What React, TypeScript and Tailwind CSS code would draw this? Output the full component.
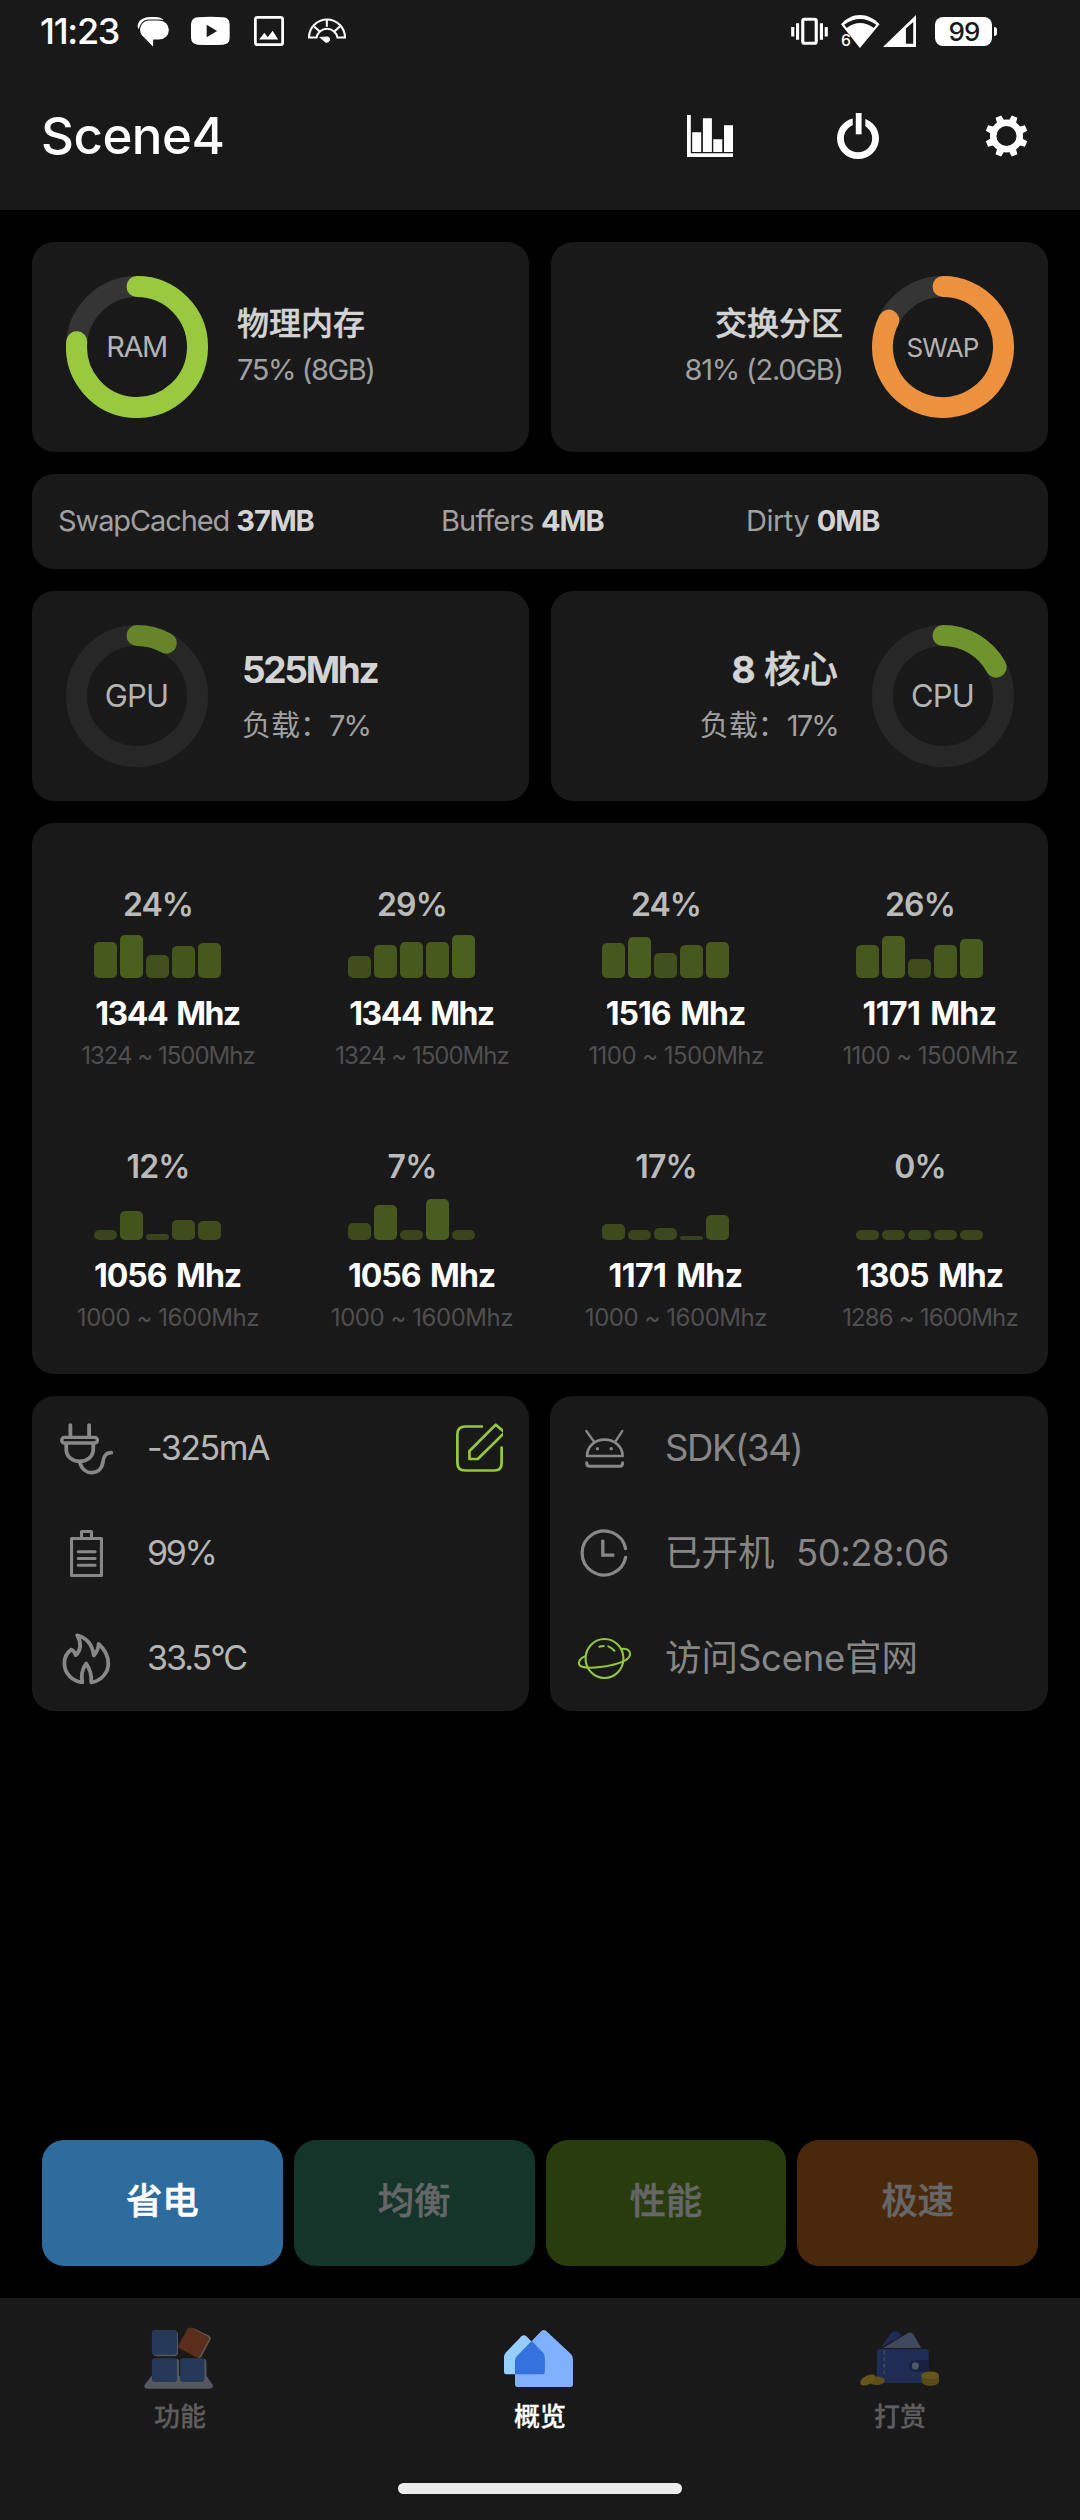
import type { ReactNode } from "react";

const SANS = "font-['Inter','Noto_Sans_CJK_SC',sans-serif]";

function Icon({ box, className, children }: { box: string; className: string; children: ReactNode }) {
  return (
    <svg viewBox={box} preserveAspectRatio="none" fill="none" className={`shrink-0 overflow-visible ${className}`}>
      {children}
    </svg>
  );
}

/* ---------- status bar ---------- */

function StatusBar() {
  return (
    <div className="flex h-[62px] items-center pl-[40px] pr-[83px] text-white">
      <span className="w-[79px] whitespace-nowrap text-[36px] font-medium leading-[40px] tracking-[-1.3px]">11:23</span>
      <Icon box="399 51 92 90" className="ml-[18px] mt-[2px] h-[30px] w-[32px]">
        <path d="M402 86C396 66 414 51 436 51H452C462 51 470 55 475 60Z" fill="#fff" />
        <path
          d="M435 60H462C480 60 492 74 492 90C492 107 480 120 462 120H447V144L412 107C398 86 412 60 435 60Z"
          fill="#fff"
          stroke="#191919"
          strokeWidth="3"
        />
      </Icon>
      <Icon box="556 51 112 82" className="ml-[22px] h-[28px] w-[39px]">
        <path d="M576 52Q612 49 648 52Q667 53 667 72V112Q667 131 648 132Q612 134 576 132Q557 131 556 112V72Q557 53 576 52Z" fill="#fff" />
        <path d="M601 74L631 92L601 110Z" fill="#191919" />
      </Icon>
      <Icon box="738 47 87 89" className="ml-[24px] h-[30px] w-[30px]">
        <rect x="742" y="51" width="79" height="81" rx="6" stroke="#fff" strokeWidth="8" />
        <path d="M753 117L768 97L778 110L792 91L808 117Z" fill="#fff" />
      </Icon>
      <Icon box="894 57 111 71" className="ml-[24px] h-[24px] w-[38px]">
        <path d="M897 112A52 53 0 0 1 1002 112H980A31 32 0 0 0 919 112Z" stroke="#fff" strokeWidth="6" />
        <path d="M912 79L928 94M949 60V80M987 79L971 94" stroke="#fff" strokeWidth="6" />
        <path d="M926 110L951 109Q960 112 958 120Q955 129 946 127Z" fill="#fff" />
      </Icon>
      <div className="ml-auto flex items-center">
        <Icon box="728 52 107 82" className="h-[27px] w-[37px]">
          <rect x="762" y="56" width="39" height="73" rx="5" stroke="#fff" strokeWidth="9" />
          <path d="M747 68V118M816 68V118" stroke="#fff" strokeWidth="9" />
          <path d="M733 79V108M830 79V108" stroke="#fff" strokeWidth="9" />
        </Icon>
        <Icon box="875 42 112 99" className="ml-[13.5px] h-[33px] w-[38.5px]">
          <text x="875" y="136" fontSize="46" fill="#fff" fontFamily="Inter" fontWeight="500">6</text>
          <path d="M930 141L875 70C890 52 910 42 930 42C950 42 972 52 987 70Z" fill="#fff" />
          <path d="M888 76Q930 44 974 76" stroke="#191919" strokeWidth="12" />
        </Icon>
        <Icon box="997 44 95 97" className="ml-[3.5px] h-[32px] w-[33px]">
          <path d="M997 141L1092 44V141Z" fill="#fff" />
          <path d="M1063 85L1084 65V131H1063Z" fill="#191919" />
        </Icon>
        <div className="ml-[19px] flex h-[29px] w-[57px] items-center justify-center rounded-[8px] bg-white pl-[1px] text-[26px] font-medium leading-[29px] tracking-[-0.8px] text-[#191919]">
          99
        </div>
        <div className="ml-[2px] h-[9px] w-[3px] rounded-r-[3px] bg-white" />
      </div>
    </div>
  );
}

/* ---------- title bar ---------- */

const TEETH = [22.5, 67.5, 112.5, 157.5, 202.5, 247.5, 292.5, 337.5];

function TitleBar() {
  return (
    <div className="flex h-[148px] items-center pl-[41px] pr-[53px]">
      <h1 className="text-[51px] font-medium leading-[60px] tracking-[-0.5px] text-white">Scene4</h1>
      <Icon box="427 345 133 126" className="ml-auto h-[42px] w-[46px]">
        <path d="M427 345h11v115h122v11H427z" fill="#fff" />
        <path d="M442 397h26v59h-26zM473 355h26v101h-26zM503 418h26v38h-26zM534 376h26v80h-26z" fill="#fff" />
      </Icon>
      <Icon box="862 339 123 138" className="ml-[104px] h-[46px] w-[42px]">
        <ellipse cx="923.5" cy="415" rx="51.5" ry="52" stroke="#fff" strokeWidth="20" />
        <path d="M908 345h37v40h-37z" fill="#191919" />
        <path d="M917 339h17v64h-17z" fill="#fff" />
      </Icon>
      <Icon box="-60 -62 120 124" className="ml-[107px] h-[42px] w-[41px]">
        <circle r="39" stroke="#fff" strokeWidth="19" />
        {TEETH.map((a) => (
          <path key={a} d="M-9 -62H9L11 -44H-11Z" fill="#fff" transform={`rotate(${a})`} />
        ))}
      </Icon>
    </div>
  );
}

/* ---------- cards ---------- */

function Ring({ label, angle, color, track, labelClass }: { label: string; angle: number; color: string; track: string; labelClass: string }) {
  const r = 60.5;
  const rad = (angle * Math.PI) / 180;
  const x = 71 + r * Math.sin(rad);
  const y = 71 - r * Math.cos(rad);
  return (
    <div className="grid h-[142px] w-[142px] shrink-0 place-items-center">
      <svg viewBox="0 0 142 142" fill="none" className="col-start-1 row-start-1 h-[142px] w-[142px]">
        <circle cx="71" cy="71" r={r} stroke={track} strokeWidth="21" />
        <path d={`M71 10.5A${r} ${r} 0 ${angle > 180 ? 1 : 0} 1 ${x} ${y}`} stroke={color} strokeWidth="21" strokeLinecap="round" />
      </svg>
      <span className={`col-start-1 row-start-1 pr-[1px] text-[#b3b3b3] ${labelClass}`}>{label}</span>
    </div>
  );
}

function Card({ className, children }: { className: string; children: ReactNode }) {
  return <section className={`rounded-[22px] bg-[#191919] ${className}`}>{children}</section>;
}

function MemStat({ name, value, nameClass }: { name: string; value: string; nameClass: string }) {
  return (
    <div className="whitespace-pre pb-[2px] text-[29px] leading-[40px] text-[#a0a0a0]">
      <span className={nameClass}>{name} </span>
      <b className="font-bold tracking-[-1.1px] text-[#d3d3d3]">{value}</b>
    </div>
  );
}

const CORES = [
  { load: "24%", mhz: "1344 Mhz", mhzClass: "tracking-[-1.5px]", range: "1324 ~ 1500Mhz", rangeClass: "tracking-[-1px]", bars: [36, 43, 23, 32, 35] },
  { load: "29%", mhz: "1344 Mhz", mhzClass: "tracking-[-1.5px]", range: "1324 ~ 1500Mhz", rangeClass: "tracking-[-1px]", bars: [22, 33, 36, 36, 43] },
  { load: "24%", mhz: "1516 Mhz", mhzClass: "tracking-[-1px]", range: "1100 ~ 1500Mhz", rangeClass: "tracking-[-0.55px]", bars: [35, 41, 25, 33, 36] },
  { load: "26%", mhz: "1171 Mhz", mhzClass: "tracking-[-0.6px]", range: "1100 ~ 1500Mhz", rangeClass: "tracking-[-0.55px]", bars: [33, 42, 19, 33, 39] },
  { load: "12%", mhz: "1056 Mhz", mhzClass: "tracking-[-1px]", range: "1000 ~ 1600Mhz", rangeClass: "tracking-[-0.45px]", bars: [10, 29, 6, 20, 19] },
  { load: "7%", mhz: "1056 Mhz", mhzClass: "tracking-[-1px]", range: "1000 ~ 1600Mhz", rangeClass: "tracking-[-0.45px]", bars: [17, 35, 10, 41, 10] },
  { load: "17%", mhz: "1171 Mhz", mhzClass: "tracking-[-0.6px]", range: "1000 ~ 1600Mhz", rangeClass: "tracking-[-0.45px]", bars: [16, 10, 12, 4, 25] },
  { load: "0%", mhz: "1305 Mhz", mhzClass: "tracking-[-1px]", range: "1286 ~ 1600Mhz", rangeClass: "tracking-[-0.85px]", bars: [10, 10, 10, 10, 10] },
];

function barColor(h: number) {
  const t = (h - 4) / 39;
  return `rgb(${Math.round(55 + 19 * t)}, ${Math.round(65 + 29 * t)}, ${Math.round(27 + 3 * t)})`;
}

function Core({ load, mhz, mhzClass, range, rangeClass, bars }: (typeof CORES)[number]) {
  return (
    <div className="flex flex-col items-center whitespace-nowrap">
      <div className="pr-[2px] text-[32px] font-semibold leading-[40px] tracking-[-0.9px] text-[#bababa]">{load}</div>
      <div className="mt-[9px] flex h-[44px] items-end gap-[3px] pr-[4px]">
        {bars.map((h, i) => (
          <div key={i} className="w-[23px] rounded-[5px]" style={{ height: h, backgroundColor: barColor(h) }} />
        ))}
      </div>
      <div className={`mt-[16px] pl-[17px] text-[32px] font-bold leading-[40px] text-white [word-spacing:3px] ${mhzClass}`}>{mhz}</div>
      <div className={`mt-[7px] pl-[18px] text-[24px] leading-[30px] text-[#4f4f4f] ${rangeClass}`}>{range}</div>
    </div>
  );
}

/* ---------- info icons ---------- */

function PlugIcon() {
  return (
    <Icon box="174 128 153 156" className="h-[52px] w-[53px]">
      <g stroke="#888" strokeWidth="11" strokeLinecap="round" strokeLinejoin="round">
        <path d="M204 134V168M258 134V168" />
        <rect x="179" y="171" width="103" height="17" rx="8" strokeWidth="10" />
        <path d="M192 190V206C192 230 210 243 231 243C252 243 270 230 270 206V190" />
        <path d="M231 246C236 266 250 277 264 277C285 277 296 262 298 245C299 228 308 217 322 217" />
      </g>
    </Icon>
  );
}

function BatteryIcon() {
  return (
    <Icon box="203 450 96 141" className="h-[47px] w-[33px]">
      <g stroke="#888" strokeWidth="9" strokeLinejoin="round" strokeLinecap="round">
        <rect x="207.500" y="475.500" width="87" height="111" />
        <path d="M236.500 475V454.500H265.500V475" />
        <path d="M227 515.500H276M227 535.500H276M227 555.500H276" />
      </g>
    </Icon>
  );
}

function FlameIcon() {
  return (
    <Icon box="183 758 136 154" className="h-[51px] w-[47px]">
      <path
        d="M224 765C250 772 268 793 272 826C281 815 286 803 286 791C302 806 314 828 314 850C314 880 292 903 265 907C266 885 260 865 250 850C240 865 234 885 239 907C210 903 187 880 187 850C187 833 195 817 207 808C212 811 218 817 220 825C234 812 238 788 224 765Z"
        stroke="#888"
        strokeWidth="11"
        strokeLinejoin="round"
      />
    </Icon>
  );
}

function EditIcon() {
  return (
    <svg viewBox="1325 129 136 147" preserveAspectRatio="none" fill="none" className="h-[49px] w-[47px] shrink-0 overflow-hidden">
      <g stroke="#93c83a" strokeWidth="8" strokeLinecap="round">
        <path d="M1400 139.500H1352Q1329 139.500 1329 162V248Q1329 271.500 1352 271.500H1436Q1457 271.500 1457 248V203" />
        <path d="M1440 134L1364 213V237H1388L1466 157Z" strokeLinejoin="round" />
      </g>
    </svg>
  );
}

function AndroidIcon() {
  return (
    <Icon box="131 149 113 114" className="h-[38px] w-[39px]">
      <g stroke="#888" strokeWidth="7" strokeLinecap="round" strokeLinejoin="round">
        <path d="M135 152L157 184M239 152L219 184" />
        <path d="M137 227C137 198 160 178 188 178C216 178 240 198 240 227Z" strokeWidth="8" />
        <path d="M136 247Q136 258 145 258H231Q240 258 240 247" strokeWidth="9" />
      </g>
      <circle cx="167" cy="205" r="5" fill="#888" />
      <circle cx="207" cy="205" r="5" fill="#888" />
    </Icon>
  );
}

function ClockIcon() {
  return (
    <Icon box="119 450 135 141" className="h-[47px] w-[46px]">
      <g stroke="#888" strokeWidth="9.500" strokeLinecap="round">
        <path d="M250 506A64.500 66 0 1 0 250 532" />
        <path d="M183 484V525.500H212" strokeLinecap="square" />
      </g>
    </Icon>
  );
}

function PlanetIcon() {
  return (
    <Icon box="110 774 154 122" className="h-[41px] w-[53px]">
      <g stroke="#93c83a" strokeWidth="6" strokeLinecap="round">
        <ellipse cx="187" cy="835" rx="55" ry="58" />
        <path d="M131 828C112 836 108 852 118 858C140 867 205 861 243 843C265 832 264 818 256 810C251 806 243 805 235 807" />
        <path d="M172 800Q178 798 185 797.500M198 799Q209 803 216 812" strokeWidth="6" />
      </g>
    </Icon>
  );
}

function InfoRow({ icon, children, className }: { icon: ReactNode; children: ReactNode; className: string }) {
  return (
    <div className="flex h-[105px] items-center whitespace-pre">
      <div className="flex w-[60px] justify-center">{icon}</div>
      <div className={`pb-[2px] pl-[31px] leading-[48px] ${className}`}>{children}</div>
    </div>
  );
}

/* ---------- bottom navigation ---------- */

function BlocksIcon() {
  return (
    <Icon box="418 653 201 187" className="mr-[3px] h-[62px] w-[69px]">
      <path d="M440 800H600L617 826Q622 839 610 839H427Q415 839 421 826Z" fill="#54575e" />
      <rect x="444" y="666" width="73" height="75" rx="10" fill="#54575e" />
      <rect x="444" y="749" width="76" height="66" rx="10" fill="#54575e" />
      <rect x="527" y="749" width="73" height="68" rx="10" fill="#54575e" />
      <rect x="441" y="662" width="73" height="75" rx="9" fill="#263858" />
      <rect x="441" y="747" width="73" height="72" rx="9" fill="#263858" />
      <rect x="523" y="747" width="71" height="72" rx="9" fill="#263858" />
      <path d="M559 655L607 679Q615 684 611 692L586 741Q582 748 576 746Z" fill="#635650" />
      <path d="M556 655L602 681Q609 686 606 693L581 740Q577 748 569 744L523 718Q515 714 519 707L544 660Q548 652 556 655Z" fill="#5a2e1a" />
    </Icon>
  );
}

function HomeIcon() {
  return (
    <Icon box="1463 660 201 171" className="mr-[4px] h-[57px] w-[69px]">
      <path d="M1514 679Q1521 672 1528 679L1582 735V793H1470Q1463 793 1463 786V742Q1463 734 1469 727Z" fill="#96cfff" />
      <path d="M1572 663Q1579 657 1586 663L1658 732Q1664 738 1664 748V823Q1664 831 1656 831H1503Q1495 831 1495 823V752Q1495 744 1501 738Z" fill="#80b1ff" />
      <path d="M1544 693L1577 728Q1582 735 1582 744V786Q1582 793 1574 793H1495V752Q1495 744 1501 738Z" fill="#3572dd" />
    </Icon>
  );
}

function WalletIcon() {
  return (
    <Icon box="929 662 231 166" className="mr-[2px] h-[55px] w-[79px]">
      <path d="M990 712L1020 668Q1030 658 1041 666L1052 676Z" fill="#1f2d54" />
      <path d="M996 713L1068 669Q1079 663 1086 673L1108 713Z" fill="#3f485d" />
      <rect x="978" y="716" width="152" height="103" rx="8" fill="#1f2d54" />
      <path d="M1000 721V796" stroke="#3f485d" strokeWidth="5" strokeDasharray="11 9" />
      <path d="M1090 750H1130V785H1090A17.500 17.500 0 0 1 1090 750Z" fill="#17213f" />
      <ellipse cx="1091" cy="767.500" rx="10.500" ry="11" fill="#50566a" />
      <ellipse cx="978" cy="812" rx="24" ry="13" fill="#5d4e1a" />
      <ellipse cx="952" cy="810" rx="25" ry="13" transform="rotate(-30 952 810)" fill="#66561b" />
      <path d="M1109 796V815Q1113 827 1134 827Q1156 827 1160 815V796Z" fill="#5d4e1a" />
      <ellipse cx="1134.500" cy="796" rx="25.500" ry="12" fill="#66561b" />
      <path d="M1109 800Q1113 811 1134 811Q1156 811 1160 800M1109 810Q1113 820 1134 820Q1156 820 1160 810" stroke="#4b3f18" strokeWidth="2" />
    </Icon>
  );
}

function NavItem({ icon, label, className }: { icon: ReactNode; label: string; className: string }) {
  return (
    <div className="flex flex-1 flex-col items-center">
      <div className="flex h-[64px] items-center">{icon}</div>
      <div className={`mt-[9px] text-[26px] font-medium leading-[36px] [-webkit-text-stroke:0.3px] ${className}`}>{label}</div>
    </div>
  );
}

const MODE =
  "flex h-[126px] flex-1 items-center justify-center rounded-[22px] pb-[5px] text-[36.5px] font-medium leading-[48px] [-webkit-text-stroke:0.5px]";

export default function App() {
  return (
    <div className={`flex h-[2520px] w-[1080px] flex-col overflow-hidden bg-black ${SANS}`}>
      <header className="h-[210px] shrink-0 bg-[#191919]">
        <StatusBar />
        <TitleBar />
      </header>

      <main className="flex flex-1 flex-col gap-[22px] px-[32px] pt-[32px]">
        <div className="grid grid-cols-2 gap-[22px]">
          <Card className="flex h-[210px] items-center gap-[29px] pl-[34px]">
            <Ring label="RAM" angle={275} color="#98c93e" track="#353535" labelClass="text-[29px] tracking-[-1.5px]" />
            <div className="whitespace-nowrap">
              <div className="text-[32px] font-medium leading-[46px] text-[#d3d3d3] [-webkit-text-stroke:0.4px]">物理内存</div>
              <div className="text-[29px] leading-[46px] tracking-[-1.4px] text-[#a0a0a0]">75% (8GB)</div>
            </div>
          </Card>
          <Card className="flex h-[210px] items-center justify-end gap-[29px] pr-[34px]">
            <div className="whitespace-nowrap text-right">
              <div className="text-[32px] font-medium leading-[46px] text-[#d3d3d3] [-webkit-text-stroke:0.4px]">交换分区</div>
              <div className="text-[29px] leading-[46px] tracking-[-1.2px] text-[#a0a0a0]">81% (2.0GB)</div>
            </div>
            <Ring label="SWAP" angle={296.4} color="#ec913d" track="#353535" labelClass="text-[26px] tracking-[-0.8px]" />
          </Card>
        </div>

        <Card className="grid h-[95px] grid-cols-[383px_305px_auto] items-center pl-[26px]">
          <MemStat name="SwapCached" value="37MB" nameClass="tracking-[-1.1px]" />
          <MemStat name="Buffers" value="4MB" nameClass="tracking-[-0.85px]" />
          <MemStat name="Dirty" value="0MB" nameClass="tracking-[-0.5px]" />
        </Card>

        <div className="grid grid-cols-2 gap-[22px]">
          <Card className="flex h-[210px] items-center gap-[34px] pl-[34px]">
            <Ring label="GPU" angle={29} color="#66852b" track="#272727" labelClass="text-[31px] tracking-[-0.8px]" />
            <div className="whitespace-nowrap pt-[4px]">
              <div className="text-[37px] font-bold leading-[56px] tracking-[-2.3px] text-[#d3d3d3]">525Mhz</div>
              <div className="text-[29px] leading-[56px] text-[#a0a0a0]">
                负载：<span className="tracking-[-2px]">7%</span>
              </div>
            </div>
          </Card>
          <Card className="flex h-[210px] items-center justify-end gap-[34px] pr-[34px]">
            <div className="whitespace-nowrap pt-[4px] text-right">
              <div className="text-[37px] font-medium leading-[56px] text-[#d3d3d3] [-webkit-text-stroke:0.4px]">
                <b className="font-bold tracking-[-1.5px]">8</b> 核心
              </div>
              <div className="text-[29px] leading-[56px] text-[#a0a0a0]">
                负载：<span className="tracking-[-1.8px]">17%</span>
              </div>
            </div>
            <Ring label="CPU" angle={61.5} color="#70942d" track="#272727" labelClass="text-[31px] tracking-[-0.8px]" />
          </Card>
        </div>

        <Card className="grid h-[551px] grid-cols-4 content-start gap-y-[76px] pt-[62px]">
          {CORES.map((c, i) => (
            <Core key={i} {...c} />
          ))}
        </Card>

        <div className="grid grid-cols-[497px_498px] gap-[21px]">
          <Card className="flex h-[315px] justify-between pl-[24px] pr-[26px]">
            <div className="text-[34px] text-[#b5b5b5]">
              <InfoRow icon={<PlugIcon />} className="tracking-[-1.5px]">-325mA</InfoRow>
              <InfoRow icon={<BatteryIcon />} className="tracking-[-2.3px]">99%</InfoRow>
              <InfoRow icon={<FlameIcon />} className="tracking-[-2px]">33.5°C</InfoRow>
            </div>
            <div className="pt-[27px]">
              <EditIcon />
            </div>
          </Card>
          <Card className="h-[315px] pl-[24px] text-[36.5px] text-[#868686]">
            <InfoRow icon={<AndroidIcon />} className="tracking-[-1.4px]">SDK(34)</InfoRow>
            <InfoRow icon={<ClockIcon />} className="">
              已开机{"  "}<span className="pl-[1px] tracking-[-0.5px]">50:28:06</span>
            </InfoRow>
            <InfoRow icon={<PlanetIcon />} className="">
              访问<span className="tracking-[-0.3px]">Scene</span>官网
            </InfoRow>
          </Card>
        </div>

        <div className="mx-[10px] mb-[32px] mt-auto flex gap-[11px]">
          <div className={`${MODE} bg-[#2e6c9e] text-white`}>省电</div>
          <div className={`${MODE} bg-[#15342a] text-[#666]`}>均衡</div>
          <div className={`${MODE} bg-[#293c0d] text-[#666]`}>性能</div>
          <div className={`${MODE} bg-[#4a280b] text-[#666]`}>极速</div>
        </div>
      </main>

      <footer className="flex h-[222px] shrink-0 flex-col bg-[#191919]">
        <nav className="flex pt-[28px]">
          <NavItem icon={<BlocksIcon />} label="功能" className="text-[#5d5d5d]" />
          <NavItem icon={<HomeIcon />} label="概览" className="text-white" />
          <NavItem icon={<WalletIcon />} label="打赏" className="text-[#5d5d5d]" />
        </nav>
        <div className="mx-auto mb-[26px] mt-auto h-[11px] w-[284px] rounded-full bg-[#ececec]" />
      </footer>
    </div>
  );
}
